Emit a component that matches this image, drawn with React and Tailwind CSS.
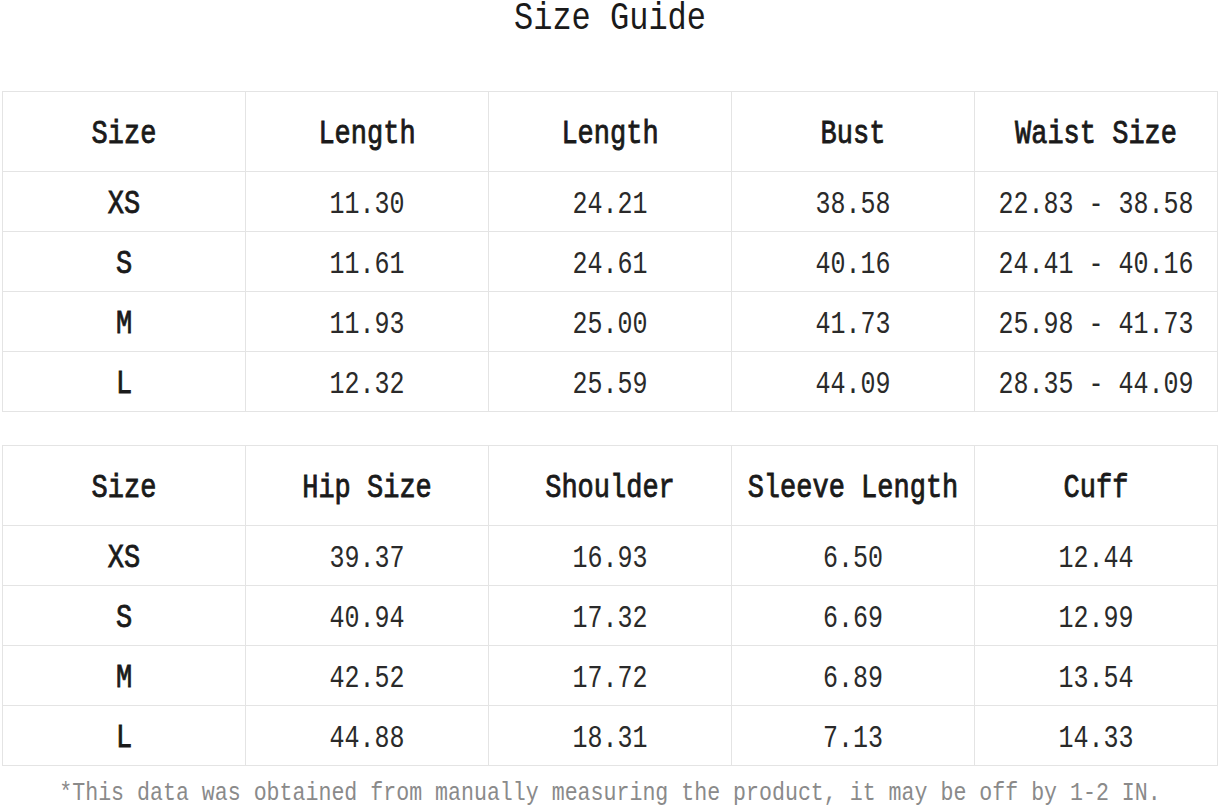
import React from 'react';

const first = {
    head: ['Size', 'Length', 'Length', 'Bust', 'Waist Size'],
    rows: [
        ['XS', '11.30', '24.21', '38.58', '22.83 - 38.58'],
        ['S', '11.61', '24.61', '40.16', '24.41 - 40.16'],
        ['M', '11.93', '25.00', '41.73', '25.98 - 41.73'],
        ['L', '12.32', '25.59', '44.09', '28.35 - 44.09'],
    ],
};

const second = {
    head: ['Size', 'Hip Size', 'Shoulder', 'Sleeve Length', 'Cuff'],
    rows: [
        ['XS', '39.37', '16.93', '6.50', '12.44'],
        ['S', '40.94', '17.32', '6.69', '12.99'],
        ['M', '42.52', '17.72', '6.89', '13.54'],
        ['L', '44.88', '18.31', '7.13', '14.33'],
    ],
};

const Tall = ({ children }) => (
    <span className="inline-block scale-y-[1.22] whitespace-pre">{children}</span>
);

const SizeTable = ({ data }) => (
    <table className="ml-[2px] w-[1216px] table-fixed border-collapse">
        <thead>
            <tr className="h-[80px]">
                {data.head.map((h, i) => (
                    <th key={i} className="border border-[#e4e4e4] pt-[8px] text-center align-middle text-[27px] font-normal text-[#1a1a1a] [-webkit-text-stroke:0.7px_#1a1a1a]">
                        <Tall>{h}</Tall>
                    </th>
                ))}
            </tr>
        </thead>
        <tbody>
            {data.rows.map((row, r) => (
                <tr key={r} className="h-[60px]">
                    {row.map((cell, i) => (
                        <td
                            key={i}
                            className={`border border-[#e4e4e4] pt-[8px] text-center align-middle ${i === 0 ? 'text-[27px] text-[#1a1a1a] [-webkit-text-stroke:0.7px_#1a1a1a]' : 'text-[25px] text-[#2a2a2a]'}`}
                        >
                            <Tall>{cell}</Tall>
                        </td>
                    ))}
                </tr>
            ))}
        </tbody>
    </table>
);

export default function App() {
    return (
        <div className="w-[1220px] h-[805px] bg-white overflow-hidden font-['Liberation_Mono',monospace]">
            {/* Title */}
            <h1 className="h-[38px] leading-[38px] text-center text-[32px] text-[#1a1a1a]">
                <Tall>Size Guide</Tall>
            </h1>

            <div className="mt-[53px]">
                <SizeTable data={first} />
            </div>
            <div className="mt-[33px]">
                <SizeTable data={second} />
            </div>

            {/* Footnote */}
            <p className="mt-[13px] text-center text-[21.6px] leading-[28px] text-[#8a8a8a]">
                <Tall>*This data was obtained from manually measuring the product, it may be off by 1-2 IN.</Tall>
            </p>
        </div>
    );
}
